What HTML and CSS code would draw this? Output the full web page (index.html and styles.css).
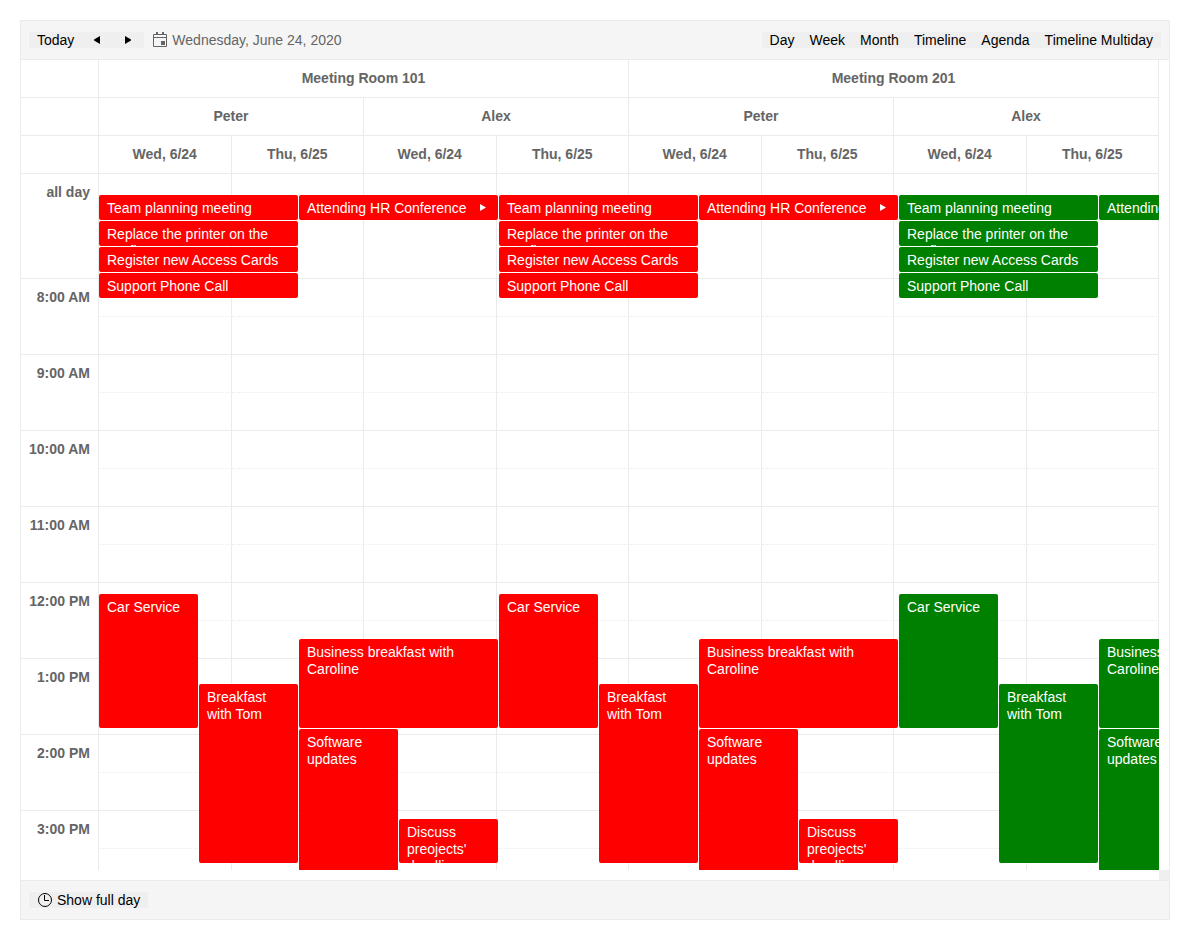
FILE: index.html
```html
<!DOCTYPE html>
<html lang="en">
<head>
<meta charset="utf-8">
<title>Scheduler</title>
<link rel="stylesheet" href="styles.css">
</head>
<body>
<main class="scheduler">
  <header class="toolbar">
    <div class="button-group">
      <button type="button" class="button">Today</button>
      <button type="button" class="button" aria-label="Previous"><svg class="icon" viewBox="0 0 16 16"><path d="M11 4v8L5 8.500v-1z"/></svg></button>
      <button type="button" class="button" aria-label="Next"><svg class="icon" viewBox="0 0 16 16"><path d="M5 4v8l6-3.500v-1z"/></svg></button>
    </div>
    <a class="current-date" href="#"><svg class="icon" viewBox="0 0 16 16"><path fill="none" stroke="currentColor" d="M1.500 2.500h13v12h-13zM1.500 5.500h13"/><path d="M4 0h2v3H4zM10 0h2v3h-2zM9 9h4v4H9z"/></svg><span>Wednesday, June 24, 2020</span></a>
    <nav class="button-group views">
      <button type="button" class="button">Day</button>
      <button type="button" class="button">Week</button>
      <button type="button" class="button">Month</button>
      <button type="button" class="button">Timeline</button>
      <button type="button" class="button">Agenda</button>
      <button type="button" class="button">Timeline Multiday</button>
    </nav>
  </header>

  <section class="view">
    <div class="calendar">
      <table class="slots">
        <colgroup><col class="time-col"><col span="8"></colgroup>
        <thead>
          <tr><th></th><th colspan="4">Meeting Room 101</th><th colspan="4">Meeting Room 201</th></tr>
          <tr><th></th><th colspan="2">Peter</th><th colspan="2">Alex</th><th colspan="2">Peter</th><th colspan="2">Alex</th></tr>
          <tr><th></th><th>Wed, 6/24</th><th>Thu, 6/25</th><th>Wed, 6/24</th><th>Thu, 6/25</th><th>Wed, 6/24</th><th>Thu, 6/25</th><th>Wed, 6/24</th><th>Thu, 6/25</th></tr>
        </thead>
        <tbody>
          <tr class="all-day"><th>all day</th><td></td><td></td><td></td><td></td><td></td><td></td><td></td><td></td></tr>
          <tr class="half"><th rowspan="2">8:00 AM</th><td></td><td></td><td></td><td></td><td></td><td></td><td></td><td></td></tr>
          <tr><td></td><td></td><td></td><td></td><td></td><td></td><td></td><td></td></tr>
          <tr class="half"><th rowspan="2">9:00 AM</th><td></td><td></td><td></td><td></td><td></td><td></td><td></td><td></td></tr>
          <tr><td></td><td></td><td></td><td></td><td></td><td></td><td></td><td></td></tr>
          <tr class="half"><th rowspan="2">10:00 AM</th><td></td><td></td><td></td><td></td><td></td><td></td><td></td><td></td></tr>
          <tr><td></td><td></td><td></td><td></td><td></td><td></td><td></td><td></td></tr>
          <tr class="half"><th rowspan="2">11:00 AM</th><td></td><td></td><td></td><td></td><td></td><td></td><td></td><td></td></tr>
          <tr><td></td><td></td><td></td><td></td><td></td><td></td><td></td><td></td></tr>
          <tr class="half"><th rowspan="2">12:00 PM</th><td></td><td></td><td></td><td></td><td></td><td></td><td></td><td></td></tr>
          <tr><td></td><td></td><td></td><td></td><td></td><td></td><td></td><td></td></tr>
          <tr class="half"><th rowspan="2">1:00 PM</th><td></td><td></td><td></td><td></td><td></td><td></td><td></td><td></td></tr>
          <tr><td></td><td></td><td></td><td></td><td></td><td></td><td></td><td></td></tr>
          <tr class="half"><th rowspan="2">2:00 PM</th><td></td><td></td><td></td><td></td><td></td><td></td><td></td><td></td></tr>
          <tr><td></td><td></td><td></td><td></td><td></td><td></td><td></td><td></td></tr>
          <tr class="half"><th rowspan="2">3:00 PM</th><td></td><td></td><td></td><td></td><td></td><td></td><td></td><td></td></tr>
          <tr><td></td><td></td><td></td><td></td><td></td><td></td><td></td><td></td></tr>
        </tbody>
      </table>

      <div class="events">
        <div class="resource">
          <div class="event planning">Team planning meeting</div>
          <div class="event printer">Replace the printer on the 1st floor</div>
          <div class="event cards">Register new Access Cards</div>
          <div class="event support">Support Phone Call</div>
          <div class="event conference"><span>Attending HR Conference</span><svg class="icon" viewBox="0 0 16 16"><path d="M6 4v7l6-3.500z"/></svg></div>
          <div class="event car">Car Service</div>
          <div class="event breakfast">Breakfast with Tom</div>
          <div class="event business">Business breakfast with Caroline</div>
          <div class="event software">Software updates</div>
          <div class="event discuss">Discuss preojects' deadlines</div>
        </div>
        <div class="resource">
          <div class="event planning">Team planning meeting</div>
          <div class="event printer">Replace the printer on the 1st floor</div>
          <div class="event cards">Register new Access Cards</div>
          <div class="event support">Support Phone Call</div>
          <div class="event conference"><span>Attending HR Conference</span><svg class="icon" viewBox="0 0 16 16"><path d="M6 4v7l6-3.500z"/></svg></div>
          <div class="event car">Car Service</div>
          <div class="event breakfast">Breakfast with Tom</div>
          <div class="event business">Business breakfast with Caroline</div>
          <div class="event software">Software updates</div>
          <div class="event discuss">Discuss preojects' deadlines</div>
        </div>
        <div class="resource green">
          <div class="event planning">Team planning meeting</div>
          <div class="event printer">Replace the printer on the 1st floor</div>
          <div class="event cards">Register new Access Cards</div>
          <div class="event support">Support Phone Call</div>
          <div class="event conference"><span>Attending HR Conference</span></div>
          <div class="event car">Car Service</div>
          <div class="event breakfast">Breakfast with Tom</div>
          <div class="event business">Business breakfast with Caroline</div>
          <div class="event software">Software updates</div>
        </div>
      </div>
    </div>
    <div class="corner"></div>
  </section>

  <footer class="toolbar bottom">
    <button type="button" class="button"><svg class="icon" viewBox="0 0 16 16"><circle cx="8" cy="8" r="6.500" fill="none" stroke="currentColor"/><path fill="none" stroke="currentColor" d="M7.500 3v5.500H12"/></svg><span>Show full day</span></button>
  </footer>
</main>
</body>
</html>
```
FILE: styles.css
```css
* {
  box-sizing: border-box;
}

body {
  margin: 0;
  padding: 20px;
  height: 100vh;
  overflow: hidden;
  background: #fff;
  color: #656565;
  font: 14px/17px "Liberation Sans", Arial, sans-serif;
}

.scheduler {
  display: flex;
  flex-direction: column;
  height: 100%;
  border: 1px solid #ebebeb;
}

/* Toolbars */
.toolbar {
  display: flex;
  flex: none;
  align-items: center;
  height: 39px;
  padding: 0 8px;
  background: #f5f5f5;
  border-bottom: 1px solid #ebebeb;
}

.bottom {
  border-top: 1px solid #ebebeb;
  border-bottom: 0;
}

.button-group {
  display: flex;
}

.views {
  margin-left: auto;
}

.button {
  display: flex;
  align-items: center;
  gap: 4px;
  height: 16px;
  padding: 0 8px;
  border: 0;
  background: #efefef;
  color: #000;
  font: inherit;
  line-height: 16px;
}

.button + .button {
  margin-left: -1px;
}

.icon {
  display: block;
  flex: none;
  width: 16px;
  height: 16px;
  fill: currentColor;
}

.current-date {
  display: flex;
  align-items: center;
  gap: 4px;
  margin-left: 8px;
  color: inherit;
  text-decoration: none;
}

/* Calendar */
.view {
  display: grid;
  flex: 1;
  grid-template-columns: 1fr 10px;
  grid-template-rows: 1fr 10px;
  min-height: 0;
}

.calendar {
  position: relative;
  min-height: 0;
  overflow: hidden;
}

.corner {
  grid-area: 2 / 2;
  background: #efefef;
}

.slots {
  width: 100%;
  table-layout: fixed;
  border-spacing: 0;
}

.time-col {
  width: 78px;
}

.slots th,
.slots td {
  height: 38px;
  padding: 0;
  border: solid #ebebeb;
  border-width: 0 1px 1px 0;
}

.slots th {
  padding: 10px 8px;
}

.slots tbody th {
  text-align: right;
  vertical-align: top;
  white-space: nowrap;
}

.slots .all-day td {
  height: 105px;
}

.slots .half td {
  border-bottom-style: dotted;
}

/* Events drawn over the slots */
.events {
  position: absolute;
  inset: 0 0 0 78px;
  display: flex;
  gap: 1px;
  padding-top: 135px;
  overflow: hidden;
}

.resource {
  display: grid;
  flex: none;
  grid-template-columns: repeat(4, 99px);
  grid-template-rows: repeat(4, 25px) 294px repeat(8, 44px);
  gap: 1px;
}

.event {
  min-width: 0;
  padding: 5px 8px 0;
  overflow: hidden;
  border-radius: 2px;
  background: #f00;
  color: #fff;
}

.green .event {
  background: green;
}

.planning { grid-area: 1 / 1 / 2 / 3; }
.printer { grid-area: 2 / 1 / 3 / 3; }
.cards { grid-area: 3 / 1 / 4 / 3; }
.support { grid-area: 4 / 1 / 5 / 3; }
.car { grid-area: 6 / 1 / 9 / 2; }
.breakfast { grid-area: 8 / 2 / 12 / 3; }
.business { grid-area: 7 / 3 / 9 / 5; }
.software { grid-area: 9 / 3 / 14 / 4; }
.discuss { grid-area: 11 / 4 / 12 / 5; }

.conference {
  display: flex;
  grid-area: 1 / 3 / 2 / 5;
  justify-content: space-between;
  white-space: nowrap;
}
```
